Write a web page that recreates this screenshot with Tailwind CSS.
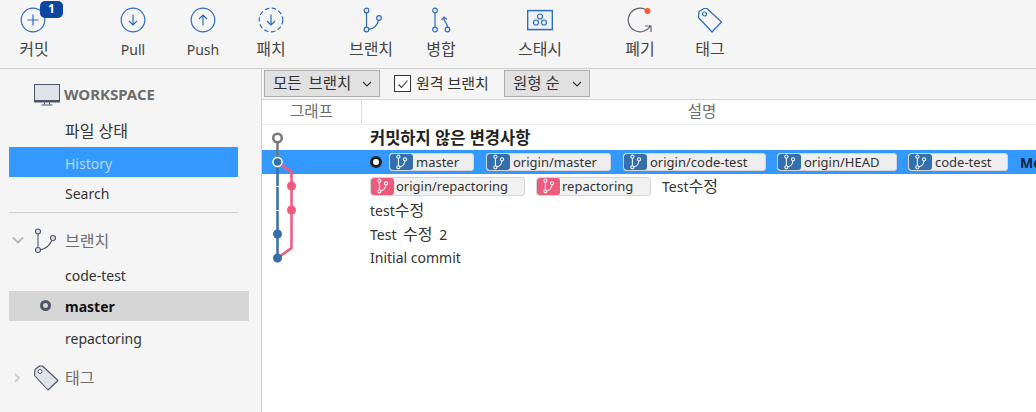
<!DOCTYPE html>
<html lang="ko">
  <head>
    <meta charset="UTF-8" />
    <title>Sourcetree</title>
    <script src="https://cdn.jsdelivr.net/npm/@tailwindcss/browser@4"></script>
  </head>
  <body class="w-[1036px] h-[412px] overflow-hidden bg-white text-[#333] text-[14px] font-['Noto_Sans','Noto_Sans_CJK_KR',sans-serif]">
    <svg width="0" height="0" class="absolute">
      <symbol id="br" viewBox="0 0 14 18">
        <circle cx="3.5" cy="3" r="1.8" fill="none" stroke="#fff" stroke-width="1.2" />
        <circle cx="3.5" cy="15" r="1.8" fill="none" stroke="#fff" stroke-width="1.2" />
        <circle cx="11" cy="6" r="1.8" fill="none" stroke="#fff" stroke-width="1.2" />
        <path d="M3.5 5v8M5.2 14.4C8 14 10.4 11.500 10.800 7.900" fill="none" stroke="#fff" stroke-width="1.2" />
      </symbol>
    </svg>

    <!-- toolbar -->
    <header class="flex h-[69px] bg-[#f5f5f5] border-b border-[#cfcfcf] text-[#444]">
      <div class="relative w-[68px] flex flex-col items-center pt-[7px]">
        <svg width="26" height="26" viewBox="0 0 26 26" class="ml-[-2px]"><circle cx="13" cy="13" r="11.800" fill="none" stroke="#2d6cc0" stroke-width="1.200" /><path d="M13 7.500v11M7.500 13h11" stroke="#2d6cc0" stroke-width="1.200" /></svg>
        <span class="mt-[6px] leading-5 text-[16px]">커밋</span>
        <span class="absolute left-[40px] top-[1px] w-[23px] h-[17px] rounded-[5px] bg-[#0b47a1] text-white text-[12px] font-bold leading-[15px] text-center">1</span>
      </div>
      <div class="ml-[30px] w-[70px] flex flex-col items-center pt-[7px]">
        <svg width="26" height="26" viewBox="0 0 26 26"><circle cx="13" cy="13" r="11.800" fill="none" stroke="#2d6cc0" stroke-width="1.200" /><path d="M13 7.500v10.500M9 14l4 4 4-4" fill="none" stroke="#2d6cc0" stroke-width="1.200" /></svg>
        <span class="mt-[7px] leading-5">Pull</span>
      </div>
      <div class="w-[70px] flex flex-col items-center pt-[7px]">
        <svg width="26" height="26" viewBox="0 0 26 26"><circle cx="13" cy="13" r="11.800" fill="none" stroke="#2d6cc0" stroke-width="1.200" /><path d="M13 18.500V8M9 12l4-4 4 4" fill="none" stroke="#2d6cc0" stroke-width="1.200" /></svg>
        <span class="mt-[7px] leading-5">Push</span>
      </div>
      <div class="w-[66px] flex flex-col items-center pt-[7px]">
        <svg width="26" height="26" viewBox="0 0 26 26"><circle cx="13" cy="13" r="11.800" fill="none" stroke="#2d6cc0" stroke-width="1.200" stroke-dasharray="4.500 2.500" /><path d="M13 7.500v10.500M9 14l4 4 4-4" fill="none" stroke="#2d6cc0" stroke-width="1.200" /></svg>
        <span class="mt-[6px] leading-5 text-[16px]">패치</span>
      </div>
      <div class="ml-[32px] w-[70px] flex flex-col items-center pt-[7px]">
        <svg width="26" height="26" viewBox="0 0 26 26"><g fill="none" stroke="#2d6cc0" stroke-width="1.200"><circle cx="8.500" cy="3.500" r="2.300" /><circle cx="8.500" cy="22.500" r="2.300" /><circle cx="21" cy="11" r="2.300" /><path d="M8.500 5.800v14.400M10.800 22.300C15.500 21.500 19.500 18 20.500 13.300" /></g></svg>
        <span class="mt-[6px] leading-5 text-[16px]">브랜치</span>
      </div>
      <div class="w-[70px] flex flex-col items-center pt-[7px]">
        <svg width="26" height="26" viewBox="0 0 26 26"><g fill="none" stroke="#2d6cc0" stroke-width="1.200"><circle cx="7" cy="3.500" r="2.300" /><circle cx="7" cy="22.500" r="2.300" /><circle cx="19.500" cy="22.500" r="2.300" /><path d="M7 5.800v14.400M19.500 20.200c0-4-3.500-5-3.500-9M13.500 13l2.500-3 3 2.500" /></g></svg>
        <span class="mt-[6px] leading-5 text-[16px]">병합</span>
      </div>
      <div class="ml-[29px] w-[70px] flex flex-col items-center pt-[7px]">
        <svg width="26" height="26" viewBox="0 0 26 26"><g fill="none" stroke="#2d6cc0" stroke-width="1.200"><rect x="0.600" y="3.600" width="24.800" height="19" fill="#eef1f6" stroke-width="1.500" /><circle cx="13" cy="9.500" r="2.500" /><circle cx="9" cy="15.500" r="2.500" /><circle cx="17" cy="15.500" r="2.500" /></g></svg>
        <span class="mt-[6px] leading-5 text-[16px]">스태시</span>
      </div>
      <div class="ml-[30px] w-[70px] flex flex-col items-center pt-[7px]">
        <svg width="26" height="26" viewBox="0 0 26 26"><path d="M18 2.300A11.800 11.800 0 1 0 23.500 18.500M18 19H24V25" fill="none" stroke="#5d6470" stroke-width="1.200" /><circle cx="20.500" cy="4" r="3" fill="#ff5a36" /></svg>
        <span class="mt-[6px] leading-5 text-[16px]">폐기</span>
      </div>
      <div class="w-[70px] flex flex-col items-center pt-[7px]">
        <svg width="26" height="26" viewBox="0 0 26 26"><g fill="none" stroke="#2d6cc0" stroke-width="1.200"><path d="M2 4.500 7 1.500h3L24.500 15 15 25 1.500 10.500z" stroke-linejoin="round" /><circle cx="7.500" cy="7" r="2" /></g></svg>
        <span class="mt-[6px] leading-5 text-[16px]">태그</span>
      </div>
    </header>

    <div class="flex h-[343px]">
      <!-- sidebar -->
      <aside class="w-[262px] shrink-0 bg-[#f5f5f5] border-r border-[#cfcfcf] pl-[9px] pr-[12px]">
        <div class="flex items-center h-[47px] pl-[25px] pt-[4px]">
          <svg width="26" height="22" viewBox="0 0 26 22"><rect x="0.500" y="0.500" width="25" height="16" fill="#dfe3ea" stroke="#4b5468" /><path d="M0 17.500h26" stroke="#4b5468" stroke-width="2" /><path d="M10.500 18.500v2M15.500 18.500v2M7.500 21h11" stroke="#4b5468" /></svg>
          <span class="ml-[4px] font-bold text-[15px] text-[#6d6d6d]">WORKSPACE</span>
        </div>
        <div class="w-[229px] h-[31px] pl-[56px] leading-[30px] text-[16px]">파일 상태</div>
        <div class="w-[229px] h-[30px] pl-[56px] leading-[33px] bg-[#3399ff] text-[#b9d8fb]">History</div>
        <div class="w-[229px] h-[36px] pl-[56px] leading-[34px] border-b border-[#cfcfcf]">Search</div>
        <div class="flex items-center h-[48px] pt-[8px]">
          <svg width="14" height="10" viewBox="0 0 14 10" class="ml-[3px]"><path d="M1 1.500 6 6.500 11 1.500" fill="none" stroke="#b8b8b8" stroke-width="1.800" /></svg>
          <svg width="24" height="26" viewBox="0 0 24 26" class="ml-[8px]"><g fill="#dfe3ea" stroke="#4b5468" stroke-width="1.100"><path d="M4 5v15M6 22c6-1 10-5 12-10" fill="none" /><circle cx="4" cy="3.500" r="2.500" /><circle cx="4" cy="22" r="2.500" /><circle cx="19" cy="10" r="2.500" /></g></svg>
          <span class="ml-[7px] text-[16px] text-[#6d6d6d]">브랜치</span>
        </div>
        <div class="h-[30px] pl-[56px] leading-[30px]">code-test</div>
        <div class="relative w-[240px] h-[30px] pl-[56px] leading-[32px] bg-[#d6d6d6] font-bold text-[#111]">
          master
          <span class="absolute left-[31px] top-[9px] w-[11px] h-[11px] rounded-full border-[3px] border-[#4d5568]"></span>
        </div>
        <div class="h-[33px] pl-[56px] leading-[36px]">repactoring</div>
        <div class="flex items-center h-[48px]">
          <svg width="14" height="12" viewBox="0 0 14 12" class="ml-[3px]"><path d="M3 2 7 6 3 10" fill="none" stroke="#cfcfcf" stroke-width="1.800" /></svg>
          <svg width="26" height="26" viewBox="0 0 26 26" class="ml-[7px]"><path d="M2 4.500 6.500 1h3L25 15.500 15 25 1.500 10.500z" fill="#dfe3ea" stroke="#4b5468" stroke-width="1.100" stroke-linejoin="round" /><circle cx="7" cy="6.500" r="2" fill="#fff" stroke="#4b5468" /></svg>
          <span class="ml-[6px] text-[16px] text-[#6d6d6d]">태그</span>
        </div>
      </aside>

      <!-- history -->
      <main class="relative flex-1 min-w-0 overflow-hidden">
        <div class="flex items-center h-[31px] pl-[2px] bg-[#f5f5f5] border-b border-[#d5d5d5] text-[15.5px]">
          <div class="flex items-center h-[27px] w-[116px] pl-[8px] bg-[#e1e1e1] border border-[#adadad] mt-[-1px]">
            <span class="[word-spacing:3px]">모든 브랜치</span>
            <svg width="10" height="6" viewBox="0 0 10 6" class="ml-auto mr-[7px]"><path d="M1 1l4 4 4-4" fill="none" stroke="#333" stroke-width="1.100" /></svg>
          </div>
          <span class="ml-[14px] w-[17px] h-[17px] border border-[#333] bg-white flex items-center justify-center mt-[-1px]">
            <svg width="12" height="12" viewBox="0 0 12 12"><path d="M1.500 6.500 4.500 9.500 10.500 2.500" fill="none" stroke="#333" stroke-width="1.100" /></svg>
          </span>
          <span class="ml-[5px] mt-[-2px] w-[72px] whitespace-nowrap text-[15px]">원격 브랜치</span>
          <div class="flex items-center h-[27px] w-[86px] ml-[16px] pl-[8px] bg-[#e1e1e1] border border-[#adadad] mt-[-1px]">
            <span>원형 순</span>
            <svg width="10" height="6" viewBox="0 0 10 6" class="ml-auto mr-[7px]"><path d="M1 1l4 4 4-4" fill="none" stroke="#333" stroke-width="1.100" /></svg>
          </div>
        </div>
        <div class="flex h-[25px] border-b border-[#ededed] text-[#6d6d6d] leading-[23px] text-center text-[15.5px]">
          <div class="w-[100px] border-r border-[#e5e5e5]">그래프</div>
          <div class="flex-1 pl-[6px]">설명</div>
        </div>

        <div class="h-[25px] pl-[108px] font-bold leading-[25px] text-[16.500px] text-[#222]">커밋하지 않은 변경사항</div>

        <div class="flex items-center h-[24px] pl-[108px] bg-[#3399ff] whitespace-nowrap text-[13px]">
          <span class="shrink-0 w-[12px] h-[12px] rounded-full border-[3px] border-[#222] bg-white mr-[7px]"></span>
          <span class="shrink-0 flex items-center h-[18px] w-[85px] mr-[12px] rounded-[3px] bg-[#eeeeee] border border-[#d5d5d5] overflow-hidden leading-4">
            <span class="w-[23px] h-full bg-[#336fae] rounded-[3px] flex items-center justify-center"><svg width="13" height="16"><use href="#br" /></svg></span><span class="ml-[3px]">master</span>
          </span>
          <span class="shrink-0 flex items-center h-[18px] w-[125px] mr-[12px] rounded-[3px] bg-[#eeeeee] border border-[#d5d5d5] overflow-hidden leading-4">
            <span class="w-[23px] h-full bg-[#336fae] rounded-[3px] flex items-center justify-center"><svg width="13" height="16"><use href="#br" /></svg></span><span class="ml-[3px]">origin/master</span>
          </span>
          <span class="shrink-0 flex items-center h-[18px] w-[143px] mr-[11px] rounded-[3px] bg-[#eeeeee] border border-[#d5d5d5] overflow-hidden leading-4">
            <span class="w-[23px] h-full bg-[#336fae] rounded-[3px] flex items-center justify-center"><svg width="13" height="16"><use href="#br" /></svg></span><span class="ml-[3px]">origin/code-test</span>
          </span>
          <span class="shrink-0 flex items-center h-[18px] w-[120px] mr-[11px] rounded-[3px] bg-[#eeeeee] border border-[#d5d5d5] overflow-hidden leading-4">
            <span class="w-[23px] h-full bg-[#336fae] rounded-[3px] flex items-center justify-center"><svg width="13" height="16"><use href="#br" /></svg></span><span class="ml-[3px]">origin/HEAD</span>
          </span>
          <span class="shrink-0 flex items-center h-[18px] w-[100px] mr-[12px] rounded-[3px] bg-[#eeeeee] border border-[#d5d5d5] overflow-hidden leading-4">
            <span class="w-[23px] h-full bg-[#336fae] rounded-[3px] flex items-center justify-center"><svg width="13" height="16"><use href="#br" /></svg></span><span class="ml-[3px]">code-test</span>
          </span>
          <span class="font-bold text-[14px] text-[#10233f]">Merge</span>
        </div>

        <div class="flex items-center h-[24px] pl-[108px] whitespace-nowrap text-[13px]">
          <span class="shrink-0 flex items-center h-[19px] w-[155px] mr-[11px] rounded-[3px] bg-[#f1f1f1] border border-[#d5d5d5] overflow-hidden leading-4">
            <span class="w-[23px] h-full bg-[#ee5a7c] rounded-[3px] flex items-center justify-center"><svg width="13" height="16"><use href="#br" /></svg></span><span class="ml-[2px]">origin/repactoring</span>
          </span>
          <span class="shrink-0 flex items-center h-[19px] w-[115px] mr-[11px] rounded-[3px] bg-[#f1f1f1] border border-[#d5d5d5] overflow-hidden leading-4">
            <span class="w-[23px] h-full bg-[#ee5a7c] rounded-[3px] flex items-center justify-center"><svg width="13" height="16"><use href="#br" /></svg></span><span class="ml-[2px]">repactoring</span>
          </span>
          <span class="text-[14px]">Test<span class="text-[16px]">수정</span></span>
        </div>
        <div class="h-[24px] pl-[108px] leading-[24px]">test<span class="text-[16px]">수정</span></div>
        <div class="h-[24px] pl-[108px] leading-[24px] [word-spacing:3px]">Test <span class="text-[16px]">수정</span> 2</div>
        <div class="h-[24px] pl-[108px] leading-[24px]">Initial commit</div>

        <!-- commit graph lies over the rows -->
        <svg width="60" height="150" viewBox="0 0 60 150" class="absolute left-0 top-[56px]">
          <path d="M15.500 13v24" stroke="#777" stroke-width="2.500" />
          <path d="M15.500 37v96" stroke="#336fae" stroke-width="2.500" stroke-dasharray="23 1" stroke-dashoffset="-1" />
          <path d="M15.500 37 29.500 47v76l-14 10" fill="none" stroke="#ee5a7c" stroke-width="2.500" />
          <circle cx="15.500" cy="13" r="4.300" fill="#fff" stroke="#777" stroke-width="2.500" />
          <circle cx="15.500" cy="37" r="4.500" fill="#336fae" stroke="#fff" stroke-width="1.500" />
          <circle cx="29.500" cy="61" r="4.500" fill="#ee5a7c" />
          <circle cx="29.500" cy="85" r="4.500" fill="#ee5a7c" />
          <circle cx="15.500" cy="109" r="4.500" fill="#336fae" />
          <circle cx="15.500" cy="133" r="4.500" fill="#336fae" />
        </svg>
      </main>
    </div>
  </body>
</html>
